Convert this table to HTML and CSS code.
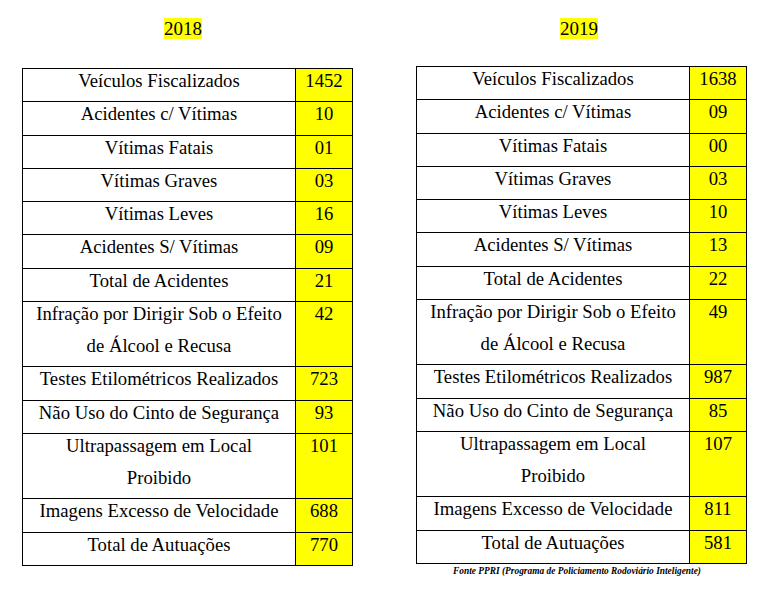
FILE: index.html
```html
<!DOCTYPE html>
<html lang="pt-BR">
<head>
<meta charset="utf-8">
<title>Fiscalização 2018 x 2019</title>
<link rel="stylesheet" href="styles.css">
</head>
<body>
<main class="page">
  <section class="year-block year-block--2018">
    <h2 class="year year--left"><span class="hl">2018</span></h2>
    <table class="stats">
      <tr><td class="label"><div class="txt">Veículos Fiscalizados</div></td><td class="num"><div class="txt">1452</div></td></tr>
      <tr><td class="label"><div class="txt">Acidentes c/ Vítimas</div></td><td class="num"><div class="txt">10</div></td></tr>
      <tr><td class="label"><div class="txt">Vítimas Fatais</div></td><td class="num"><div class="txt">01</div></td></tr>
      <tr><td class="label"><div class="txt">Vítimas Graves</div></td><td class="num"><div class="txt">03</div></td></tr>
      <tr><td class="label"><div class="txt">Vítimas Leves</div></td><td class="num"><div class="txt">16</div></td></tr>
      <tr><td class="label"><div class="txt">Acidentes S/ Vítimas</div></td><td class="num"><div class="txt">09</div></td></tr>
      <tr><td class="label"><div class="txt">Total de Acidentes</div></td><td class="num"><div class="txt">21</div></td></tr>
      <tr><td class="label"><div class="txt">Infração por Dirigir Sob o Efeito<br>de Álcool e Recusa</div></td><td class="num"><div class="txt">42</div></td></tr>
      <tr><td class="label"><div class="txt">Testes Etilométricos Realizados</div></td><td class="num"><div class="txt">723</div></td></tr>
      <tr><td class="label"><div class="txt">Não Uso do Cinto de Segurança</div></td><td class="num"><div class="txt">93</div></td></tr>
      <tr><td class="label"><div class="txt">Ultrapassagem em Local<br>Proibido</div></td><td class="num"><div class="txt">101</div></td></tr>
      <tr><td class="label"><div class="txt">Imagens Excesso de Velocidade</div></td><td class="num"><div class="txt">688</div></td></tr>
      <tr><td class="label"><div class="txt">Total de Autuações</div></td><td class="num"><div class="txt">770</div></td></tr>
    </table>
  </section>
  <section class="year-block year-block--2019">
    <h2 class="year year--right"><span class="hl">2019</span></h2>
    <table class="stats">
      <tr><td class="label"><div class="txt">Veículos Fiscalizados</div></td><td class="num"><div class="txt">1638</div></td></tr>
      <tr><td class="label"><div class="txt">Acidentes c/ Vítimas</div></td><td class="num"><div class="txt">09</div></td></tr>
      <tr><td class="label"><div class="txt">Vítimas Fatais</div></td><td class="num"><div class="txt">00</div></td></tr>
      <tr><td class="label"><div class="txt">Vítimas Graves</div></td><td class="num"><div class="txt">03</div></td></tr>
      <tr><td class="label"><div class="txt">Vítimas Leves</div></td><td class="num"><div class="txt">10</div></td></tr>
      <tr><td class="label"><div class="txt">Acidentes S/ Vítimas</div></td><td class="num"><div class="txt">13</div></td></tr>
      <tr><td class="label"><div class="txt">Total de Acidentes</div></td><td class="num"><div class="txt">22</div></td></tr>
      <tr><td class="label"><div class="txt">Infração por Dirigir Sob o Efeito<br>de Álcool e Recusa</div></td><td class="num"><div class="txt">49</div></td></tr>
      <tr><td class="label"><div class="txt">Testes Etilométricos Realizados</div></td><td class="num"><div class="txt">987</div></td></tr>
      <tr><td class="label"><div class="txt">Não Uso do Cinto de Segurança</div></td><td class="num"><div class="txt">85</div></td></tr>
      <tr><td class="label"><div class="txt">Ultrapassagem em Local<br>Proibido</div></td><td class="num"><div class="txt">107</div></td></tr>
      <tr><td class="label"><div class="txt">Imagens Excesso de Velocidade</div></td><td class="num"><div class="txt">811</div></td></tr>
      <tr><td class="label"><div class="txt">Total de Autuações</div></td><td class="num"><div class="txt">581</div></td></tr>
    </table>
    <p class="source">Fonte PPRI (Programa de Policiamento Rodoviário Inteligente)</p>
  </section>
</main>
</body>
</html>
```

FILE: styles.css
```css
html, body {
  margin: 0;
  padding: 0;
  background: #ffffff;
}

body {
  font-family: "Liberation Serif", "Times New Roman", serif;
  color: #000000;
}

.page {
  display: flex;
  align-items: flex-start;
  gap: 63px;
  padding: 18px 0 0 22px;
}

.year-block {
  width: 331px;
  display: flex;
  flex-direction: column;
}

.year {
  margin: 0;
  font-size: 19px;
  font-weight: normal;
  line-height: 22px;
  text-align: center;
}

.year--left {
  padding-right: 9px;
}

.year--right {
  padding-right: 5px;
}

.hl {
  background: #ffff00;
}

.stats {
  border-collapse: collapse;
  width: 331px;
  font-size: 18.7px;
  table-layout: fixed;
}

.year-block--2018 .stats {
  margin-top: 28px;
}

.year-block--2019 .stats {
  margin-top: 26px;
}

.stats td {
  border: 1px solid #000000;
  padding: 0 0 4px;
  line-height: 32.25px;
  vertical-align: top;
  text-align: center;
}

.stats .txt {
  margin-top: -4px;
}

.stats .num {
  width: 56px;
  background: #ffff00;
}

.source {
  margin: 2px 0 0;
  font-size: 9.4px;
  line-height: 10px;
  font-weight: bold;
  font-style: italic;
  text-align: center;
  padding-right: 9px;
}
```
